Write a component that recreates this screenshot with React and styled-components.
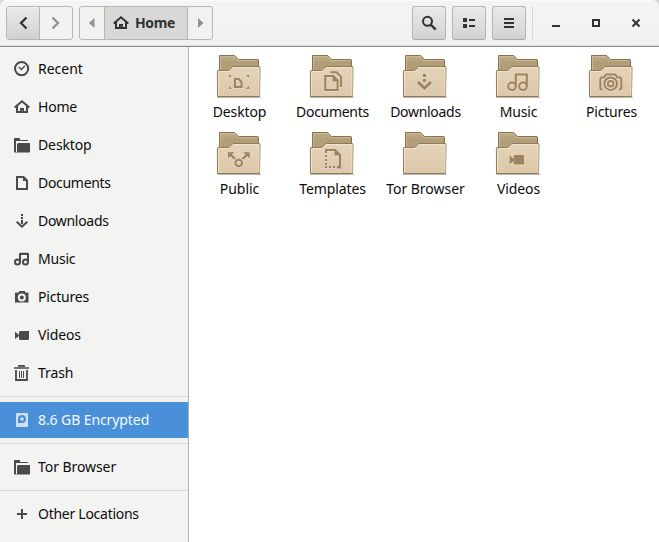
import React from "react";
import styled, { createGlobalStyle, css } from "styled-components";

const GlobalStyle = createGlobalStyle`
  * { box-sizing: border-box; }
  body { margin: 0; background: #d5d5d3; overflow: hidden; }
`;

const Window = styled.div`
  width: 659px;
  height: 542px;
  display: flex;
  flex-direction: column;
  background: #fff;
  border-radius: 7px 7px 0 0;
  overflow: hidden;
  font-family: "Noto Sans", "Open Sans", sans-serif;
  font-size: 14px;
  color: #0c0c0c;
`;

const HeaderBar = styled.header`
  height: 47px;
  flex: none;
  display: flex;
  align-items: flex-start;
  padding: 6px 0 0 6px;
  background: linear-gradient(#f4f4f4, #f1f1f1);
  border-bottom: 1px solid #8f8f8a;
  box-shadow: inset 0 1px #fbfbfb, inset 0 -1px #dcdcda;
`;

const raised = css`
  background: linear-gradient(#e9e9e7, #dcdcda 60%, #d0d0ce);
  box-shadow: inset 0 1px #f0f0ef;
`;

const ButtonGroup = styled.div`
  display: flex;
  height: 34px;
  margin-right: ${(p) => p.$after}px;
  border: 1px solid #b6b6b3;
  border-radius: 3px;
  overflow: hidden;
  background: #f1f1f0;
`;

const Segment = styled.button`
  width: ${(p) => p.$width}px;
  display: flex;
  align-items: center;
  justify-content: center;
  gap: 6px;
  padding: ${(p) => (p.$active ? "0 4px 1px 0" : "0")};
  border: 0;
  border-right: ${(p) => (p.$last ? 0 : "1px solid #b6b6b3")};
  background: ${(p) => (p.$active ? "#d8d8d6" : "transparent")};
  color: ${(p) => (p.$dim ? "#909291" : "#2e3436")};
  font: 700 14px "Noto Sans", sans-serif;
  letter-spacing: -0.35px;
  ${(p) => p.$raised && raised}
`;

const ToolButton = styled.button`
  width: 34px;
  height: 34px;
  margin-right: 6px;
  padding: 0;
  display: flex;
  align-items: center;
  justify-content: center;
  border: 1px solid #b3b3b0;
  border-bottom-color: #a5a5a1;
  border-radius: 3px;
  color: #2e3436;
  ${raised}
`;

const Spacer = styled.div`
  flex: 1;
`;

const HeaderDivider = styled.div`
  width: 1px;
  height: 34px;
  background: #d9d9d7;
`;

const WindowControls = styled.div`
  display: flex;
  gap: 24px;
  height: 34px;
  align-items: center;
  padding: 0 15px;
  color: #2e3436;
`;

const Body = styled.div`
  flex: 1;
  display: flex;
  min-height: 0;
`;

const Sidebar = styled.nav`
  width: 189px;
  flex: none;
  display: flex;
  flex-direction: column;
  gap: 2px;
  padding-top: 4px;
  background: #f3f3f2;
  border-right: 1px solid #b3b3af;
`;

const Place = styled.div`
  height: 36px;
  flex: none;
  display: flex;
  align-items: center;
  gap: 8px;
  padding-left: 14px;
  background: ${(p) => (p.$selected ? "#4a90d9" : "transparent")};
  color: ${(p) => (p.$selected ? "#cfe0f5" : "#4a4a48")};
`;

const PlaceName = styled.span`
  padding-bottom: 2px;
  color: ${(p) => (p.$selected ? "#f4f8fd" : "#0c0c0c")};
  letter-spacing: ${(p) => p.$track}px;
  white-space: nowrap;
`;

const Divider = styled.div`
  height: 1px;
  flex: none;
  margin: 3px 0;
  background: #d8d8d6;
`;

const Files = styled.main`
  flex: 1;
  display: grid;
  grid-template-columns: repeat(5, 93px);
  grid-auto-rows: 77px;
  padding: 5px 0 0 4px;
  align-content: start;
`;

const File = styled.div`
  display: flex;
  flex-direction: column;
  align-items: center;
`;

const FileName = styled.span`
  height: 20px;
  margin-top: 2px;
  line-height: 20px;
  letter-spacing: ${(p) => p.$track}px;
  white-space: nowrap;
`;

const Svg = styled.svg`
  display: block;
  flex: none;
`;

const FolderSvg = styled(Svg)`
  margin-right: 2px;
`;

const Icon = ({ children, size = 16 }) => (
  <Svg width={size} height={size} viewBox={`0 0 ${size} ${size}`} fill="none" stroke="currentColor" strokeWidth="2">
    {children}
  </Svg>
);

const fill = { fill: "currentColor", stroke: "none" };

const HomeGlyph = () => (
  <>
    <path d="M.7 8.500 8 2.300l7.300 6.200M3 7v6h10V7" />
    <path {...fill} d="M6 14V9h4v5H8.700v-2.500h-1.200V14z" />
  </>
);
const FolderGlyph = () => (
  <>
    <path {...fill} d="M0 1.500 .5 1H5.500l.5.500V3h8v1H2v11.500H.5L0 15z" />
    <path {...fill} d="M3 7l1-1h11.500l.5.500V15l-.5.500H2V15h1z" />
  </>
);

const glyphs = {
  recent: (
    <>
      <circle cx="7.600" cy="7.600" r="6.600" />
      <path d="m4.800 6 2.700 2.500L10.800 5" strokeWidth="1.300" />
    </>
  ),
  home: <HomeGlyph />,
  folder: <FolderGlyph />,
  document: (
    <>
      <path d="M3 2h6.500L13 5.500V14H3z" />
      <path {...fill} d="M9 1v5h5z" />
    </>
  ),
  download: (
    <>
      <path {...fill} d="M7 1h2v2H7zM7 4h2v2H7zM7 7h2v4H7z" />
      <path d="m2.700 8.700 5.300 5 5.300-5" />
    </>
  ),
  music: (
    <>
      <circle cx="3.500" cy="11" r="2.500" />
      <circle cx="11.500" cy="11" r="2.500" />
      <path d="M6 11V3h8v8M6 2.800h8" />
    </>
  ),
  picture: (
    <path
      {...fill}
      fillRule="evenodd"
      d="M5 2h6v1.500h3l.5.500v9.500H1V4l.5-.5H5zM7.800 4.500a4 4 0 1 0 0 8 4 4 0 0 0 0-8zm0 2a2 2 0 1 1 0 4 2 2 0 0 1 0-4z"
    />
  ),
  video: <path {...fill} d="M1 4.500 5 8V5l1-1h9v8l-1 1H6l-1-1V9l-4 3z" />,
  trash: (
    <>
      <path d="M0 3h15M5 2V.9h5V2" strokeWidth="1.700" />
      <path d="M2 5v10h11V5" strokeWidth="1.800" />
      <path d="M5.500 6v7M7.500 6v7M9.500 6v7" strokeWidth="1" />
    </>
  ),
  drive: (
    <path
      {...fill}
      fillRule="evenodd"
      d="M2.500 1h11l.5.500v13l-.5.500h-11l-.5-.5v-13zM8 3a4 4 0 0 0-4 4v4h4a4 4 0 0 0 0-8zm0 2.200a1.800 1.800 0 1 1 0 3.600 1.800 1.800 0 0 1 0-3.600z"
    />
  ),
  plus: <path d="M8 3v10M3 8h10" />,
};

const emblems = {
  desktop: (
    <>
      <path {...fill} d="M14 23h3l-3 3zM34 23h-3l3 3zM14 37h3l-3-3zM34 37h-3l3-3z" />
      <path d="M20 27h3.500l3 3v5H20z" />
    </>
  ),
  documents: (
    <>
      <path d="M17.300 24h8l4.300 4.500V38H17.300z" />
      <path {...fill} d="M24.500 23v6.500H30z" />
      <path d="M22.500 20.300h6l4.500 4.500V35" />
    </>
  ),
  downloads: (
    <>
      <path {...fill} d="M22 22h3v3h-3zM22 27h3v3h-3z" />
      <path d="m17 30 6.500 6.200L30 30" strokeWidth="2.800" />
    </>
  ),
  music: (
    <>
      <circle cx="18" cy="34.300" r="3.800" />
      <circle cx="29" cy="34.300" r="3.800" />
      <path d="M21.800 34.300V22.500h11v11.800" />
    </>
  ),
  pictures: (
    <>
      <path d="M15.500 37.500H14.300l-1-1V27l1-1.500H17l2.200-3h9l2.200 3h2.900l1 1.500v9.500l-1 1H32" />
      <circle cx="23.700" cy="31.700" r="6.300" />
      <circle cx="23.700" cy="31.700" r="2.800" />
    </>
  ),
  public: (
    <>
      <circle cx="23.700" cy="34" r="3.300" />
      <path d="m14 24.300 6 5.700M33.500 24.300l-6 5.700" strokeWidth="2.400" />
      <path {...fill} d="M13 23.300h6.500L13 29.500zM34.700 23.300h-6.500l6.500 6.200z" />
    </>
  ),
  templates: (
    <>
      <path d="M18 24v-3h9l5 5v12.500h-3" />
      <path {...fill} d="M26.500 20v6.500H33z" />
      <path d="M18 26v13" strokeDasharray="2 2" />
      <path d="M17 38h14" strokeDasharray="2 2" />
    </>
  ),
  videos: <path {...fill} d="m15.700 26.500 4 3.500v-3l1-1H29l1 1v7.500l-1 1h-8.300l-1-1V32l-4 3.300z" />,
};

const Folder = ({ kind }) => (
  <FolderSvg width="48" height="48" viewBox="0 0 48 48" fill="none">
    <defs>
      <linearGradient id="front" x1="0" y1="0" x2="0" y2="1">
        <stop stopColor="#e5d3ba" />
        <stop offset="1" stopColor="#dcc8aa" />
      </linearGradient>
      <linearGradient id="back" x1="0" y1="0" x2="0" y2="1">
        <stop stopColor="#c1ad88" />
        <stop offset=".4" stopColor="#b19d77" />
      </linearGradient>
    </defs>
    <path d="M2 45.500h44" stroke="#000" strokeOpacity=".28" />
    <path d="M4.500 20V3.500H19.500l.8.500 3.200 3.500H43l.5.500v14" fill="url(#back)" stroke="#87744e" />
    <path d="M5.500 18V4.500h14l3.500 4h19.500" stroke="#d0bd9b" strokeOpacity=".75" />
    <path
      d="M3 18.500h10.500l1.200-.7 2.800-2.800.8-.5H44.500l.5.500-.5 29.500h-42l-.1-25.500z"
      fill="url(#front)"
      stroke="#917b50"
    />
    <path d="M3.500 43.500V19.500H14l4.500-4H44V43.500" stroke="#f2e7d5" strokeOpacity=".8" />
    {kind && (
      <>
        <g transform="translate(0 1)" color="#efe2cd" stroke="currentColor" strokeWidth="2" opacity=".7">
          {emblems[kind]}
        </g>
        <g color="#9d8460" stroke="currentColor" strokeWidth="2">
          {emblems[kind]}
        </g>
      </>
    )}
  </FolderSvg>
);

const placeGroups = [
  [
    ["Recent", "recent", 0],
    ["Home", "home", -0.2],
    ["Desktop", "folder", -0.12],
    ["Documents", "document", -0.3],
    ["Downloads", "download", -0.3],
    ["Music", "music", -0.2],
    ["Pictures", "picture", -0.2],
    ["Videos", "video", -0.15],
    ["Trash", "trash", -0.1],
  ],
  [["8.6 GB Encrypted", "drive", -0.09]],
  [["Tor Browser", "folder", -0.07]],
  [["Other Locations", "plus", -0.27]],
];

const files = [
  ["Desktop", "desktop", -0.12],
  ["Documents", "documents", -0.3],
  ["Downloads", "downloads", -0.3],
  ["Music", "music", -0.2],
  ["Pictures", "pictures", -0.2],
  ["Public", "public", 0],
  ["Templates", "templates", -0.1],
  ["Tor Browser", null, -0.03],
  ["Videos", "videos", -0.1],
];

export default function App() {
  return (
    <>
      <GlobalStyle />
      <Window>
        <HeaderBar>
          <ButtonGroup $after={6}>
            <Segment $width={33} $raised aria-label="Back">
              <Icon><path d="M11.500 2.500 6 8l5.500 5.500" strokeWidth="2.300" /></Icon>
            </Segment>
            <Segment $width={32} $dim $last aria-label="Forward">
              <Icon><path d="M4.500 2.500 10 8l-5.500 5.500" strokeWidth="2.300" /></Icon>
            </Segment>
          </ButtonGroup>
          <ButtonGroup $after={0}>
            <Segment $width={25} $dim aria-label="Previous folder">
              <Icon><path {...fill} d="M10.500 3v10l-5.500-5z" /></Icon>
            </Segment>
            <Segment $width={83} $active>
              <Icon><HomeGlyph /></Icon>
              Home
            </Segment>
            <Segment $width={24} $dim $last aria-label="Next folder">
              <Icon><path {...fill} d="M6 3v10l5.500-5z" /></Icon>
            </Segment>
          </ButtonGroup>
          <Spacer />
          <ToolButton aria-label="Search">
            <Icon>
              <circle cx="6.500" cy="6.300" r="4.500" />
              <path d="m9.700 9.700 5 5" strokeWidth="2.400" />
            </Icon>
          </ToolButton>
          <ToolButton aria-label="View">
            <Icon><path {...fill} d="M2 3h4v4H2zM2 9h4v4H2zM8 4h6v2H8zM8 10h6v2H8z" /></Icon>
          </ToolButton>
          <ToolButton aria-label="Menu">
            <Icon><path {...fill} d="M3 3h10v2H3zM3 7h10v2H3zM3 11h10v2H3z" /></Icon>
          </ToolButton>
          <HeaderDivider />
          <WindowControls>
            <Icon><path {...fill} d="M4 10h8v2H4z" /></Icon>
            <Icon><path d="M5 5h6v6H5z" /></Icon>
            <Icon><path d="m4.500 4.500 7 7m0-7-7 7" /></Icon>
          </WindowControls>
        </HeaderBar>
        <Body>
          <Sidebar>
            {placeGroups.map((group, i) => (
              <React.Fragment key={i}>
                {i > 0 && <Divider />}
                {group.map(([name, glyph, track]) => (
                  <Place key={name} $selected={glyph === "drive"}>
                    <Icon>{glyphs[glyph]}</Icon>
                    <PlaceName $selected={glyph === "drive"} $track={track}>{name}</PlaceName>
                  </Place>
                ))}
              </React.Fragment>
            ))}
          </Sidebar>
          <Files>
            {files.map(([name, kind, track]) => (
              <File key={name}>
                <Folder kind={kind} />
                <FileName $track={track}>{name}</FileName>
              </File>
            ))}
          </Files>
        </Body>
      </Window>
    </>
  );
}
